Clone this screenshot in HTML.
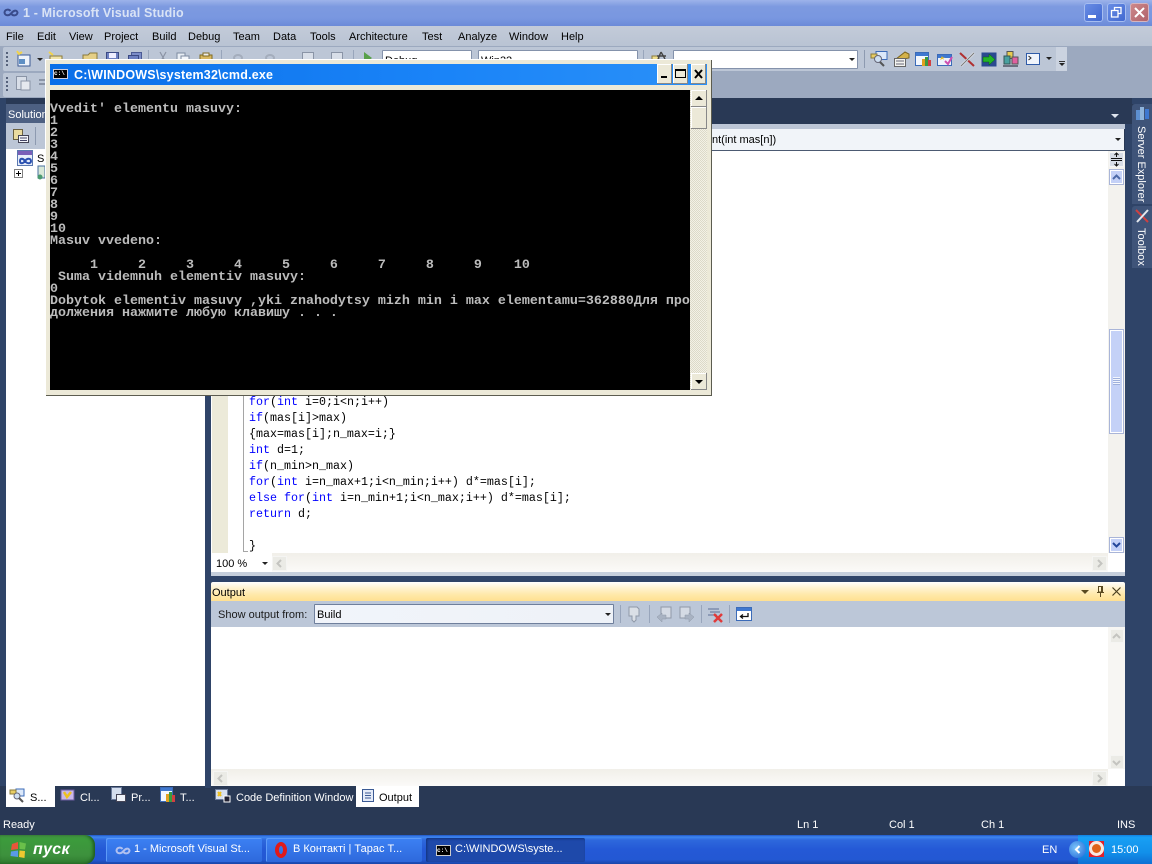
<!DOCTYPE html>
<html><head><meta charset="utf-8"><style>
html,body{margin:0;padding:0}
body{width:1152px;height:864px;overflow:hidden;position:relative;background:#293955;font-family:"Liberation Sans",sans-serif;font-size:11px;color:#000}
.a{position:absolute}
.t{position:absolute;white-space:pre;line-height:14px}
.m{top:30px}
.code{position:absolute;left:249px;font:11.67px/16px "Liberation Mono",monospace;white-space:pre;color:#000}
.code b{font-weight:normal;color:#0000ff}
.con{position:absolute;left:50px;top:104px;font:bold 13.33px/12px "Liberation Mono",monospace;color:#bcbcbc;white-space:pre}
.combo{position:absolute;background:#fff;border:1px solid #8492ab;box-sizing:border-box;border-radius:1px}
.dd{position:absolute;width:0;height:0;border-left:3px solid transparent;border-right:3px solid transparent;border-top:3px solid #222}
.btn{position:absolute;background:#c4d1f7;border:1px solid #fff;outline:1px solid #a9b5d8;box-sizing:border-box}
.task{position:absolute;top:838px;height:24px;background:linear-gradient(#3c81f3,#3575e8 50%,#2e68dc);border-radius:2px;color:#fff;font-size:11px;line-height:22px;box-shadow:inset 1px 1px 0 #5d9bf8}
.vs{position:absolute;background:#f3f2ee}
svg{position:absolute;overflow:visible}
</style></head><body>

<!-- Title bar -->
<div class="a" style="left:0;top:0;width:1152px;height:26px;background:linear-gradient(#9db3ea,#7d9ae0 25%,#7997e0 70%,#6b8ad8)"></div>
<svg style="left:3px;top:8px" width="16" height="9" viewBox="0 0 16 9"><path d="M7.5 3C6 1 2 1 1.500 4.500C2 8 6 8 8 5.500C10 3 13.500 1 14.500 4.500C14 8 10 8 8.500 6" fill="none" stroke="#3a4c8c" stroke-width="2"/></svg>
<div class="t" style="left:23px;top:6px;font-size:12.5px;font-weight:bold;color:#d9e3f5;letter-spacing:.15px">1 - Microsoft Visual Studio</div>
<div class="a" style="left:1084px;top:3px;width:19px;height:19px;background:linear-gradient(135deg,#6b8fe6,#3f66cf);border-radius:3px;box-shadow:inset 0 0 0 1px #a6bdf0"><div class="a" style="left:4px;top:12px;width:8px;height:3px;background:#fff"></div></div>
<div class="a" style="left:1107px;top:3px;width:19px;height:19px;background:linear-gradient(135deg,#6b8fe6,#3f66cf);border-radius:3px;box-shadow:inset 0 0 0 1px #a6bdf0">
<svg style="left:4px;top:4px" width="11" height="11"><path d="M3.500 3V.5H10V6.500H7.500M.5 3.500H7V10H.5Z" fill="none" stroke="#fff" stroke-width="1.300"/></svg></div>
<div class="a" style="left:1130px;top:3px;width:19px;height:19px;background:linear-gradient(135deg,#cf8a8c,#ae6068);border-radius:3px;box-shadow:inset 0 0 0 1px #d4b5c0">
<svg style="left:4px;top:4px" width="11" height="11"><path d="M1 1L10 10M10 1L1 10" stroke="#fff" stroke-width="2"/></svg></div>

<!-- Menu -->
<div class="a" style="left:0;top:26px;width:1152px;height:20px;background:linear-gradient(#c3cbd9,#b9c3d3)"></div>
<div class="t m" style="left:6px">File</div><div class="t m" style="left:37px">Edit</div><div class="t m" style="left:69px">View</div><div class="t m" style="left:104px">Project</div><div class="t m" style="left:152px">Build</div><div class="t m" style="left:188px">Debug</div><div class="t m" style="left:233px">Team</div><div class="t m" style="left:273px">Data</div><div class="t m" style="left:310px">Tools</div><div class="t m" style="left:349px">Architecture</div><div class="t m" style="left:422px">Test</div><div class="t m" style="left:458px">Analyze</div><div class="t m" style="left:509px">Window</div><div class="t m" style="left:561px">Help</div>

<!-- Toolbars -->
<div class="a" style="left:0;top:46px;width:1152px;height:52px;background:#9ca9bf"></div>
<div class="a" style="left:3px;top:47px;width:1064px;height:24px;background:#bcc6d6;border-radius:2px"></div>
<div class="a" style="left:3px;top:73px;width:48px;height:24px;background:#bcc6d6;border-radius:2px"></div>
<div class="a" style="left:6px;top:52px;width:2px;height:14px;background:repeating-linear-gradient(#55617a 0 2px,transparent 2px 4px)"></div>
<div class="a" style="left:6px;top:77px;width:2px;height:14px;background:repeating-linear-gradient(#55617a 0 2px,transparent 2px 4px)"></div>
<!-- left icons -->
<svg style="left:16px;top:51px" width="16" height="16"><rect x="2" y="4" width="12" height="11" fill="#eef3fb" stroke="#3b5a94"/><rect x="3" y="8" width="6" height="5" fill="#5f8fc4"/><path d="M1 0L3 3L6 1" stroke="#f2d34a" stroke-width="2" fill="none"/></svg>
<div class="dd" style="left:37px;top:58px"></div>
<svg style="left:48px;top:51px" width="16" height="16"><path d="M2 5H14V15H2Z" fill="#f0e3a8" stroke="#8a7a3a"/><path d="M1 1L5 4" stroke="#f2d34a" stroke-width="2"/></svg>
<svg style="left:82px;top:52px" width="16" height="12"><path d="M1 3H6L8 1H15V11H1Z" fill="#e5cf86" stroke="#8a7a3a"/></svg>
<svg style="left:106px;top:52px" width="13" height="13"><rect x=".5" y=".5" width="12" height="12" fill="#6c7fc0" stroke="#3b4a84"/><rect x="3" y="1" width="7" height="5" fill="#eef"/></svg>
<svg style="left:128px;top:52px" width="14" height="13"><rect x="3.500" y=".5" width="10" height="9" fill="#7c8dc8" stroke="#4b5a94"/><rect x=".5" y="3.500" width="10" height="9" fill="#6c7fc0" stroke="#3b4a84"/></svg>
<div class="a" style="left:148px;top:50px;width:1px;height:18px;background:#98a5bb"></div>
<svg style="left:158px;top:52px" width="10" height="13"><path d="M2 0L7 9M8 0L3 9" stroke="#8b93a4" stroke-width="1.200"/></svg>
<svg style="left:176px;top:52px" width="14" height="13"><rect x="1" y="1" width="8" height="10" fill="#e8edf4" stroke="#7d8aa0"/><rect x="5" y="4" width="8" height="9" fill="#f3f6fb" stroke="#7d8aa0"/></svg>
<svg style="left:199px;top:52px" width="14" height="13"><rect x="1" y="3" width="12" height="10" fill="#d8b860" stroke="#806a20"/><rect x="4" y="1" width="6" height="3" fill="#eee" stroke="#806a20"/></svg>
<div class="a" style="left:221px;top:50px;width:1px;height:18px;background:#98a5bb"></div>
<div class="a" style="left:233px;top:54px;width:10px;height:8px;border:2px solid #a4adbc;border-radius:50%;box-sizing:border-box"></div>
<div class="a" style="left:265px;top:54px;width:10px;height:8px;border:2px solid #a4adbc;border-radius:50%;box-sizing:border-box"></div>
<div class="a" style="left:302px;top:52px;width:12px;height:11px;background:#d8dee8;border:1px solid #8a94a6;box-sizing:border-box"></div>
<div class="a" style="left:331px;top:52px;width:12px;height:11px;background:#d8dee8;border:1px solid #8a94a6;box-sizing:border-box"></div>
<div class="a" style="left:353px;top:50px;width:1px;height:18px;background:#98a5bb"></div>
<svg style="left:363px;top:52px" width="10" height="12"><path d="M1 0L9 6L1 12Z" fill="#58a04a"/></svg>
<div class="combo" style="left:382px;top:50px;width:90px;height:20px"></div>
<div class="t" style="left:385px;top:54px">Debug</div>
<div class="combo" style="left:478px;top:50px;width:160px;height:20px"></div>
<div class="t" style="left:481px;top:54px">Win32</div>
<div class="a" style="left:643px;top:50px;width:1px;height:18px;background:#98a5bb"></div>
<svg style="left:651px;top:51px" width="16" height="14"><path d="M1 5H8V13H1Z" fill="#f0e090" stroke="#8a7a3a"/><path d="M10 1L7 8M10 1L14 8M6 5H15" stroke="#444" stroke-width="1.400"/></svg>
<div class="combo" style="left:673px;top:50px;width:185px;height:19px"></div>
<div class="dd" style="left:849px;top:58px"></div>
<div class="a" style="left:864px;top:50px;width:1px;height:18px;background:#8d9ab0"></div>
<!-- right toolbar icons -->
<svg style="left:870px;top:51px" width="18" height="16"><rect x="6" y=".5" width="11" height="8" fill="#dbe8fa" stroke="#3b6bb8"/><rect x="1" y="3" width="6" height="4" fill="#e8cd64" stroke="#8a7a3a"/><circle cx="8" cy="8" r="3.500" fill="#cfe0f2" stroke="#667"/><path d="M10 11L14 15" stroke="#555" stroke-width="2"/></svg>
<svg style="left:893px;top:51px" width="17" height="16"><path d="M3 8L12 1L16 3V7L10 8Z" fill="#d4b24a" stroke="#7a6420"/><rect x="1.500" y="7.500" width="11" height="8" fill="#f4f4ef" stroke="#666"/><path d="M3 10H11M3 13H11" stroke="#667"/></svg>
<svg style="left:915px;top:52px" width="17" height="15"><rect x=".5" y=".5" width="13" height="13" fill="#f3f7fd" stroke="#3b6bb8"/><rect x="1" y="1" width="12" height="3" fill="#3f78d0"/><rect x="7" y="7" width="3" height="7" fill="#e0a020"/><rect x="10" y="5" width="3" height="9" fill="#3a9a40"/><rect x="13" y="8" width="3" height="6" fill="#d24040"/></svg>
<svg style="left:937px;top:51px" width="16" height="15"><rect x=".5" y="3.500" width="14" height="11" fill="#eef3fb" stroke="#3b6bb8"/><rect x="1" y="4" width="13" height="3" fill="#3f78d0"/><path d="M3 9L5 5L7 9L4 6.500H8Z" fill="#eec020"/><path d="M8 10L11 13L15 6" fill="none" stroke="#cf4fb0" stroke-width="2"/></svg>
<svg style="left:959px;top:52px" width="16" height="15"><path d="M1 1L15 14" stroke="#b03030" stroke-width="2"/><path d="M15 1L2 14" stroke="#dfe3ea" stroke-width="2.500"/><path d="M15 1L2 14" stroke="#777" stroke-width="1"/></svg>
<svg style="left:981px;top:52px" width="16" height="15"><rect x=".5" y=".5" width="15" height="14" fill="#2a4a90"/><path d="M2 5H8V2L14 7.500L8 13V10H2Z" fill="#22b428" stroke="#0a5a10" stroke-width=".5"/></svg>
<svg style="left:1003px;top:51px" width="17" height="16"><rect x="4" y=".5" width="6" height="7" fill="#e8cc50" stroke="#555"/><rect x="1" y="5" width="6" height="8" fill="#48a0a0" stroke="#355"/><rect x="9" y="6" width="6" height="7" fill="#e060a0" stroke="#555"/><rect x="0" y="14" width="15" height="2" fill="#6a6f80"/></svg>
<svg style="left:1026px;top:53px" width="14" height="12"><rect x=".5" y=".5" width="13" height="11" fill="#f0f4fb" stroke="#2f5ba8"/><path d="M2.500 3L5 5L2.500 7" fill="none" stroke="#222"/></svg>
<div class="dd" style="left:1046px;top:57px"></div>
<div class="a" style="left:1056px;top:47px;width:11px;height:24px;background:#cbd3e0"></div>
<div class="a" style="left:1059px;top:61px;width:6px;height:1px;background:#333"></div>
<div class="dd" style="left:1059px;top:63px"></div>
<svg style="left:16px;top:76px" width="16" height="15"><rect x=".5" y=".5" width="10" height="13" fill="#d8dee8" stroke="#8a94a6"/><rect x="5" y="5" width="9" height="9" fill="#e5e8ee" stroke="#8a94a6"/></svg>
<svg style="left:38px;top:76px" width="10" height="14"><path d="M1 4H9M1 8H7" stroke="#8a94a6" stroke-width="2"/></svg>

<!-- Mid-blue docking background -->
<div class="a" style="left:0;top:98px;width:6px;height:688px;background:#2f4468"></div>
<div class="a" style="left:1125px;top:98px;width:27px;height:688px;background:#2f4468"></div>

<!-- Solution panel -->
<div class="a" style="left:6px;top:104px;width:199px;height:682px;background:#fff;border-radius:2px 2px 0 0"></div>
<div class="a" style="left:6px;top:104px;width:199px;height:19px;background:#4d6082"></div>
<div class="t" style="left:8px;top:108px;color:#fff">Solution Explorer</div>
<div class="a" style="left:6px;top:123px;width:199px;height:26px;background:#bcc6d6"></div>
<svg style="left:13px;top:128px" width="16" height="16"><rect x=".5" y="1.500" width="9" height="10" fill="#eadba0" stroke="#6a6040"/><rect x="5.500" y="7.500" width="10" height="7" fill="#f4f6fa" stroke="#445"/><path d="M7 10H14M7 12.500H14" stroke="#446"/></svg>
<div class="a" style="left:35px;top:127px;width:1px;height:18px;background:#8d9ab0"></div>
<svg style="left:17px;top:150px" width="17" height="17"><rect x=".5" y=".5" width="15" height="15" fill="#e8eefa" stroke="#5a78b0"/><rect x="1" y="1" width="14" height="4" fill="#7a5fb8"/><path d="M8 11C6 8 3 8 3 11C3 14 6 14 8 11C10 8 14 8 14 11C14 14 10 14 8 11" fill="none" stroke="#2a50b0" stroke-width="2"/></svg>
<div class="t" style="left:37px;top:152px">S</div>
<div class="a" style="left:14px;top:169px;width:9px;height:9px;background:#fff;border:1px solid #808080;box-sizing:border-box"></div>
<div class="a" style="left:16px;top:173px;width:5px;height:1px;background:#000"></div>
<div class="a" style="left:18px;top:171px;width:1px;height:5px;background:#000"></div>
<svg style="left:37px;top:166px" width="8" height="15"><rect x="1" y="0" width="7" height="12" fill="#d8e8d8" stroke="#4a70a0"/><circle cx="3" cy="11" r="2.500" fill="#4a9a70"/></svg>
<div class="a" style="left:205px;top:98px;width:6px;height:690px;background:#2f4468"></div>

<!-- Editor -->
<div class="a" style="left:211px;top:98px;width:941px;height:26px;background:#293955"></div>
<div class="a" style="left:1132px;top:98px;width:20px;height:6px;background:#2f4468"></div>
<div class="dd" style="left:1111px;top:114px;border-top-color:#dfe5ef;border-left-width:4px;border-right-width:4px;border-top-width:4px"></div>
<div class="a" style="left:211px;top:124px;width:914px;height:5px;background:#bcc6d6"></div>
<div class="a" style="left:211px;top:129px;width:913px;height:21px;background:#f1f4f9"></div>
<div class="a" style="left:211px;top:150px;width:914px;height:1px;background:#4c5a72"></div>
<div class="t" style="left:712px;top:133px">nt(int mas[n])</div>
<div class="dd" style="left:1115px;top:138px"></div>
<div class="a" style="left:211px;top:151px;width:914px;height:402px;background:#fff"></div>
<div class="a" style="left:212px;top:151px;width:16px;height:402px;background:#ecead9"></div>
<div class="a" style="left:243px;top:151px;width:1px;height:400px;background:#a5a5a5"></div>
<div class="a" style="left:243px;top:551px;width:5px;height:1px;background:#a5a5a5"></div>
<div class="code" style="top:394px"><b>for</b>(<b>int</b> i=0;i&lt;n;i++)
<b>if</b>(mas[i]&gt;max)
{max=mas[i];n_max=i;}
<b>int</b> d=1;
<b>if</b>(n_min&gt;n_max)
<b>for</b>(<b>int</b> i=n_max+1;i&lt;n_min;i++) d*=mas[i];
<b>else</b> <b>for</b>(<b>int</b> i=n_min+1;i&lt;n_max;i++) d*=mas[i];
<b>return</b> d;

}</div>
<!-- vscroll -->
<div class="vs" style="left:1108px;top:151px;width:17px;height:402px"></div>
<div class="a" style="left:1109px;top:152px;width:15px;height:15px;background:#d8dde6;border:1px solid #f5f5f5;box-sizing:border-box"></div>
<svg style="left:1110px;top:153px" width="13" height="13"><path d="M1 5.500H12M1 7.500H12M6.500 0V4M4.500 2L6.500 0L8.500 2M6.500 13V9M4.500 11L6.500 13L8.500 11" stroke="#111" fill="none"/></svg>
<div class="btn" style="left:1110px;top:170px;width:13px;height:14px"></div>
<svg style="left:1112px;top:174px" width="9" height="6"><path d="M1 5L4.500 1.500L8 5" fill="none" stroke="#4d6aa8" stroke-width="2"/></svg>
<div class="btn" style="left:1110px;top:330px;width:13px;height:103px"></div>
<div class="a" style="left:1113px;top:377px;width:7px;height:8px;background:repeating-linear-gradient(#f2f5fd 0 1px,#9fb0dc 1px 2px)"></div>
<div class="btn" style="left:1110px;top:538px;width:13px;height:14px"></div>
<svg style="left:1112px;top:542px" width="9" height="6"><path d="M1 1L4.500 4.500L8 1" fill="none" stroke="#24479a" stroke-width="2"/></svg>
<!-- hscroll -->
<div class="a" style="left:211px;top:553px;width:914px;height:19px;background:linear-gradient(#f1efe9,#fbfaf8)"></div>
<div class="a" style="left:211px;top:553px;width:61px;height:19px;background:#fff"></div>
<div class="t" style="left:216px;top:557px">100 %</div>
<div class="dd" style="left:262px;top:562px"></div>
<div class="a" style="left:272px;top:556px;width:15px;height:15px;background:#ebebe6;border:1px solid #f5f5f3;box-sizing:border-box"></div>
<svg style="left:276px;top:559px" width="6" height="9"><path d="M5 1L1.500 4.500L5 8" fill="none" stroke="#c4c4c0" stroke-width="2"/></svg>
<div class="a" style="left:1092px;top:556px;width:15px;height:15px;background:#ebebe6;border:1px solid #f5f5f3;box-sizing:border-box"></div>
<svg style="left:1097px;top:559px" width="6" height="9"><path d="M1 1L4.500 4.500L1 8" fill="none" stroke="#c4c4c0" stroke-width="2"/></svg>
<div class="a" style="left:1108px;top:553px;width:17px;height:19px;background:#fff"></div>
<div class="a" style="left:211px;top:572px;width:914px;height:4px;background:#c6cfdc"></div>
<div class="a" style="left:211px;top:576px;width:914px;height:6px;background:#2f4468"></div>

<!-- Output -->
<div class="a" style="left:211px;top:582px;width:914px;height:19px;background:linear-gradient(#fff,#fff3d2 30%,#ffe8a6 70%,#ffe091);border-radius:2px 2px 0 0"></div>
<div class="t" style="left:212px;top:586px">Output</div>
<div class="dd" style="left:1081px;top:590px;border-top-color:#5a4a20;border-left-width:4px;border-right-width:4px;border-top-width:4px"></div>
<svg style="left:1096px;top:586px" width="9" height="11"><path d="M2.500 .5H6.500V6H2.500ZM1 6.500H8M4.500 7V11M5.500 1V6" fill="none" stroke="#5a4a20"/></svg>
<svg style="left:1112px;top:587px" width="9" height="9"><path d="M.5 .5L8.500 8.500M8.500 .5L.5 8.500" stroke="#4a4020" stroke-width="1.200"/></svg>
<div class="a" style="left:211px;top:601px;width:914px;height:26px;background:#bcc7d8"></div>
<div class="t" style="left:218px;top:608px;color:#1a1a1a">Show output from:</div>
<div class="combo" style="left:314px;top:604px;width:300px;height:20px;background:linear-gradient(90deg,#f1f4fa,#eef2f8);border-color:#6f7f9c"></div>
<div class="t" style="left:317px;top:608px">Build</div>
<div class="dd" style="left:605px;top:613px"></div>
<div class="a" style="left:620px;top:605px;width:1px;height:18px;background:#98a5bb"></div>
<svg style="left:627px;top:606px" width="14" height="17"><path d="M2 1H10L12 3V10H9V14L7 16L5 14V10H2Z" fill="#dadfe6" stroke="#8f98a8"/></svg>
<div class="a" style="left:649px;top:605px;width:1px;height:18px;background:#98a5bb"></div>
<svg style="left:656px;top:606px" width="17" height="17"><rect x="5" y="1" width="10" height="11" fill="#d4dae4" stroke="#8f98a8"/><path d="M1 11L6 7V9H10V13H6V16Z" fill="#a8b2c2" stroke="#8f98a8" stroke-width=".5"/></svg>
<svg style="left:678px;top:606px" width="17" height="17"><rect x="2" y="1" width="10" height="11" fill="#d4dae4" stroke="#8f98a8"/><path d="M16 11L11 7V9H7V13H11V16Z" fill="#a8b2c2" stroke="#8f98a8" stroke-width=".5"/></svg>
<div class="a" style="left:701px;top:605px;width:1px;height:18px;background:#98a5bb"></div>
<svg style="left:707px;top:607px" width="18" height="16"><path d="M1 2H12M3 5H13M1 8H10" stroke="#5e6f96"/><path d="M7 7L15 15M15 7L7 15" stroke="#e03a3a" stroke-width="2.500"/></svg>
<div class="a" style="left:729px;top:605px;width:1px;height:18px;background:#98a5bb"></div>
<svg style="left:736px;top:607px" width="16" height="14"><rect x=".5" y=".5" width="15" height="13" fill="#fff" stroke="#3b6bb8"/><rect x="1" y="1" width="14" height="3" fill="#3f78d0"/><path d="M12 6V9.500H5M7 7.500L4.500 9.500L7 11.500" fill="none" stroke="#111" stroke-width="1.300"/></svg>
<div class="a" style="left:211px;top:627px;width:914px;height:142px;background:#fff"></div>
<div class="vs" style="left:1108px;top:627px;width:17px;height:142px;background:#f7f6f3"></div>
<div class="a" style="left:1110px;top:629px;width:14px;height:14px;background:#ebebe6;border:1px solid #f5f5f3;box-sizing:border-box"></div>
<svg style="left:1112px;top:633px" width="9" height="6"><path d="M1 5L4.500 1.500L8 5" fill="none" stroke="#c4c4c0" stroke-width="2"/></svg>
<div class="a" style="left:1110px;top:755px;width:14px;height:14px;background:#ebebe6;border:1px solid #f5f5f3;box-sizing:border-box"></div>
<svg style="left:1112px;top:760px" width="9" height="6"><path d="M1 1L4.500 4.500L8 1" fill="none" stroke="#c4c4c0" stroke-width="2"/></svg>
<div class="a" style="left:211px;top:769px;width:914px;height:17px;background:linear-gradient(#f1efe9,#fbfaf8)"></div>
<div class="a" style="left:213px;top:771px;width:15px;height:15px;background:#ebebe6;border:1px solid #f5f5f3;box-sizing:border-box"></div>
<svg style="left:217px;top:774px" width="6" height="9"><path d="M5 1L1.500 4.500L5 8" fill="none" stroke="#c4c4c0" stroke-width="2"/></svg>
<div class="a" style="left:1092px;top:771px;width:15px;height:15px;background:#ebebe6;border:1px solid #f5f5f3;box-sizing:border-box"></div>
<svg style="left:1097px;top:774px" width="6" height="9"><path d="M1 1L4.500 4.500L1 8" fill="none" stroke="#c4c4c0" stroke-width="2"/></svg>
<div class="a" style="left:1108px;top:769px;width:17px;height:17px;background:#fff"></div>

<!-- Right side tabs -->
<div class="a" style="left:1132px;top:104px;width:20px;height:100px;background:#3f5479;border-radius:3px 0 0 0"></div>
<div class="a" style="left:1132px;top:206px;width:20px;height:62px;background:#3f5479;border-radius:3px 0 0 0"></div>
<svg style="left:1135px;top:107px" width="15" height="15"><rect x="5" y="0" width="4" height="13" fill="#8fb4dc"/><rect x="1" y="3" width="4" height="10" fill="#5d8fd0"/><rect x="10" y="2" width="4" height="10" fill="#3f78d0"/></svg>
<svg style="left:1135px;top:209px" width="15" height="15"><path d="M1 1L13 13" stroke="#d04040" stroke-width="2"/><path d="M13 1L2 13" stroke="#e4e8ee" stroke-width="2"/></svg>
<div class="t" style="left:1134px;top:126px;writing-mode:vertical-rl;color:#fff;line-height:14px">Server Explorer</div>
<div class="t" style="left:1134px;top:228px;writing-mode:vertical-rl;color:#fff;line-height:14px">Toolbox</div>

<!-- Bottom tabs -->
<div class="a" style="left:6px;top:786px;width:49px;height:21px;background:#fff"></div>
<svg style="left:10px;top:788px" width="15" height="15"><rect x="6" y="1" width="8" height="7" fill="#dbe8fa" stroke="#3b6bb8"/><rect x="0" y="2" width="6" height="4" fill="#e8cd64" stroke="#8a7a3a"/><circle cx="7" cy="8" r="3" fill="#cfe0f2" stroke="#667"/><path d="M9 10L13 14" stroke="#555" stroke-width="2"/></svg>
<div class="t" style="left:30px;top:791px">S...</div>
<svg style="left:60px;top:788px" width="16" height="15"><rect x="1" y="2" width="13" height="10" fill="#c9b8ea" stroke="#6a5aa0"/><path d="M4 4L7 9L11 4" stroke="#eec020" stroke-width="2.500" fill="none"/></svg>
<div class="t" style="left:80px;top:791px;color:#fff">Cl...</div>
<svg style="left:111px;top:787px" width="16" height="16"><rect x=".5" y=".5" width="10" height="12" fill="#d4deee" stroke="#6a7a9a"/><rect x="5.500" y="7.500" width="9" height="7" fill="#eef2f8" stroke="#445"/></svg>
<div class="t" style="left:131px;top:791px;color:#fff">Pr...</div>
<svg style="left:160px;top:787px" width="16" height="16"><rect x=".5" y=".5" width="12" height="14" fill="#f3f7fd" stroke="#3b6bb8"/><rect x="1" y="1" width="11" height="3" fill="#3f78d0"/><rect x="6" y="7" width="3" height="8" fill="#e0a020"/><rect x="9" y="5" width="3" height="10" fill="#3a9a40"/><rect x="12" y="8" width="3" height="7" fill="#d24040"/></svg>
<div class="t" style="left:180px;top:791px;color:#fff">T...</div>
<svg style="left:215px;top:787px" width="16" height="16"><rect x=".5" y="2.500" width="12" height="10" fill="#d8e0ee" stroke="#6a7a9a"/><path d="M3 5L6 9M6 5L3 9" stroke="#eec020" stroke-width="2"/><rect x="9" y="9" width="6" height="6" fill="#223" stroke="#fff"/></svg>
<div class="t" style="left:236px;top:791px;color:#fff">Code Definition Window</div>
<div class="a" style="left:356px;top:786px;width:63px;height:21px;background:#fff"></div>
<svg style="left:362px;top:789px" width="12" height="13"><rect x=".5" y=".5" width="11" height="12" fill="#e4ebf8" stroke="#3b5a94"/><path d="M3 4H9M3 6.500H9M3 9H9" stroke="#3b5a94"/></svg>
<div class="t" style="left:379px;top:791px">Output</div>

<!-- Status bar -->
<div class="t" style="left:3px;top:818px;color:#fff">Ready</div>
<div class="t" style="left:797px;top:818px;color:#fff">Ln 1</div>
<div class="t" style="left:889px;top:818px;color:#fff">Col 1</div>
<div class="t" style="left:981px;top:818px;color:#fff">Ch 1</div>
<div class="t" style="left:1117px;top:818px;color:#fff">INS</div>

<!-- Taskbar -->
<div class="a" style="left:0;top:835px;width:1152px;height:29px;background:linear-gradient(#1f56c8 0,#3f86ee 2px,#2e68dc 5px,#2459d6 50%,#2358d3 85%,#1a46a8)"></div>
<div class="a" style="left:0;top:835px;width:95px;height:29px;background:linear-gradient(#4c9a4c,#3c9c3c 12%,#3d913d 70%,#2e7a2e);border-radius:0 10px 10px 0;box-shadow:inset -2px 0 3px #1e5a1e"></div>
<svg style="left:10px;top:841px" width="19" height="18"><path d="M2 3L8 1V8L1 9Z" fill="#e8553a"/><path d="M9.500 1L16 2.500L15 8.500L9.500 8Z" fill="#6ac04a"/><path d="M1 10.500L8 9.500V16L0.500 15Z" fill="#5a9ae8"/><path d="M9.500 9.500L15 10L14.500 17L9 16Z" fill="#f0c830"/></svg>
<div class="t" style="left:33px;top:840px;color:#fff;font-size:16px;font-weight:bold;font-style:italic;line-height:19px;letter-spacing:.3px">пуск</div>
<div class="task" style="left:106px;width:156px"><span class="a" style="left:28px;top:0;white-space:pre">1 - Microsoft Visual St...</span></div>
<svg style="left:115px;top:846px" width="16" height="9" viewBox="0 0 16 9"><path d="M7.500 3C6 1 2 1 1.500 4.500C2 8 6 8 8 5.500C10 3 13.500 1 14.500 4.500C14 8 10 8 8.500 6" fill="none" stroke="#b0c0f0" stroke-width="2"/></svg>
<div class="task" style="left:266px;width:156px"><span class="a" style="left:27px;top:0;white-space:pre">В Контакті | Тарас Т...</span></div>
<div class="a" style="left:275px;top:842px;width:12px;height:16px;border:4px solid #e01a1a;border-radius:50%;box-sizing:border-box"></div>
<div class="task" style="left:426px;width:159px;background:#1e49aa;box-shadow:inset 1px 1px 2px #12327a"><span class="a" style="left:29px;top:0;white-space:pre">C:\WINDOWS\syste...</span></div>
<div class="a" style="left:436px;top:845px;width:15px;height:11px;background:#000;border:1px solid #ccc;box-sizing:border-box;color:#fff;font:bold 6px/9px 'Liberation Mono',monospace;white-space:pre">c:\</div>
<div class="t" style="left:1042px;top:843px;color:#fff">EN</div>
<div class="a" style="left:1078px;top:835px;width:74px;height:29px;background:linear-gradient(#1280e0,#18a0f4 8%,#1290ea 60%,#0e70d4)"></div>
<div class="a" style="left:1069px;top:841px;width:17px;height:17px;border-radius:50%;background:radial-gradient(circle at 40% 40%,#7cc4fa,#1a62d4)"></div>
<svg style="left:1074px;top:845px" width="7" height="9"><path d="M5.500 1L2 4.500L5.500 8" fill="none" stroke="#fff" stroke-width="2"/></svg>
<div class="a" style="left:1089px;top:841px;width:15px;height:16px;background:#e0202a"></div>
<div class="a" style="left:1089px;top:841px;width:15px;height:15px;border-radius:50%;background:#f8e8e0"></div>
<div class="a" style="left:1092px;top:844px;width:9px;height:9px;border-radius:50%;background:#e0641a"></div>
<div class="t" style="left:1111px;top:843px;color:#fff">15:00</div>

<!-- CMD window -->
<div class="a" style="left:45px;top:59px;width:667px;height:337px;background:#ece9d8;box-shadow:inset 1px 1px 0 #fff,inset -1px -1px 0 #5c5c50"></div>
<div class="a" style="left:50px;top:64px;width:657px;height:21px;background:linear-gradient(90deg,#0a6fe8,#1a84f8 60%,#2a90f8)"></div>
<div class="a" style="left:53px;top:69px;width:15px;height:10px;background:#000;border:1px solid #ccd;box-sizing:border-box;color:#fff;font:bold 6px/8px 'Liberation Mono',monospace;white-space:pre">c:\</div>
<div class="t" style="left:74px;top:68px;color:#fff;font-size:12.5px;font-weight:bold;letter-spacing:.2px">C:\WINDOWS\system32\cmd.exe</div>
<div class="a" style="left:657px;top:64px;width:15px;height:20px;background:#ece9d8;box-shadow:inset -1px -1px 0 #888,inset 1px 1px 0 #fff"><div class="a" style="left:4px;top:12px;width:6px;height:2px;background:#000"></div></div>
<div class="a" style="left:673px;top:64px;width:15px;height:20px;background:#ece9d8;box-shadow:inset -1px -1px 0 #888,inset 1px 1px 0 #fff"><div class="a" style="left:2px;top:5px;width:11px;height:9px;border:1px solid #000;border-top-width:2px;box-sizing:border-box"></div></div>
<div class="a" style="left:691px;top:64px;width:15px;height:20px;background:#ece9d8;box-shadow:inset -1px -1px 0 #888,inset 1px 1px 0 #fff"><svg style="left:3px;top:6px" width="9" height="8"><path d="M1 0L8 8M8 0L1 8" stroke="#000" stroke-width="2"/></svg></div>
<div class="a" style="left:50px;top:90px;width:640px;height:300px;background:#000"></div>
<div class="a" style="left:690px;top:90px;width:17px;height:300px;background:repeating-conic-gradient(#f3f1e6 0 25%,#dcd9c8 0 50%) 0 0/2px 2px"></div>
<div class="a" style="left:691px;top:90px;width:16px;height:17px;background:#ece9d8;box-shadow:inset -1px -1px 0 #888,inset 1px 1px 0 #fff"></div>
<div class="dd" style="left:695px;top:96px;border-top:0;border-bottom:4px solid #000;border-left-width:4px;border-right-width:4px"></div>
<div class="a" style="left:691px;top:107px;width:16px;height:22px;background:#ece9d8;box-shadow:inset -1px -1px 0 #888,inset 1px 1px 0 #fff"></div>
<div class="a" style="left:691px;top:373px;width:16px;height:17px;background:#ece9d8;box-shadow:inset -1px -1px 0 #888,inset 1px 1px 0 #fff"></div>
<div class="dd" style="left:695px;top:380px;border-top-color:#000;border-left-width:4px;border-right-width:4px;border-top-width:4px"></div>
<div class="con">Vvedit' elementu masuvy:
1
2
3
4
5
6
7
8
9
10
Masuv vvedeno:

     1     2     3     4     5     6     7     8     9    10
 Suma videmnuh elementiv masuvy:
0
Dobytok elementiv masuvy ,yki znahodytsy mizh min i max elementamu=362880Для про
должения нажмите любую клавишу . . .</div>
</body></html>
